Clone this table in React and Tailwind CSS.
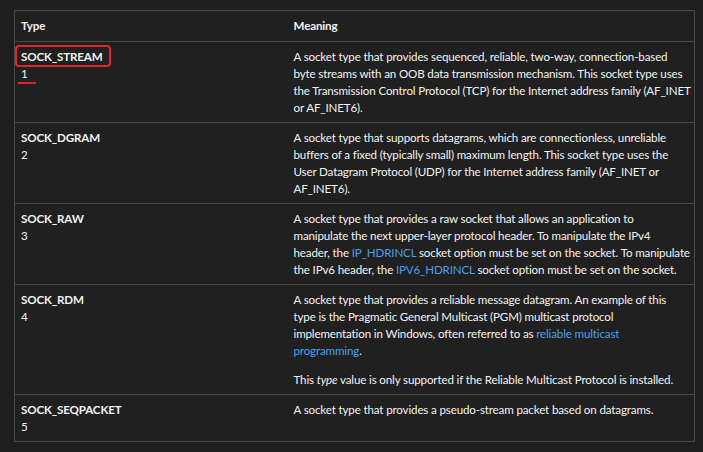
const Link = ({ children }) => <a className="text-[#4a9fe8]">{children}</a>;

const rows = [
  {
    name: 'SOCK_STREAM',
    value: '1',
    highlight: true,
    meaning: (
      <p>
        A socket type that provides sequenced, reliable, two-way, connection-based
        <br />
        byte streams with an OOB data transmission mechanism. This socket type uses
        <br />
        the Transmission Control Protocol (TCP) for the Internet address family (AF_INET
        <br />
        or AF_INET6).
      </p>
    ),
  },
  {
    name: 'SOCK_DGRAM',
    value: '2',
    meaning: (
      <p>
        A socket type that supports datagrams, which are connectionless, unreliable
        <br />
        buffers of a fixed (typically small) maximum length. This socket type uses the
        <br />
        User Datagram Protocol (UDP) for the Internet address family (AF_INET or
        <br />
        AF_INET6).
      </p>
    ),
  },
  {
    name: 'SOCK_RAW',
    value: '3',
    meaning: (
      <p>
        A socket type that provides a raw socket that allows an application to
        <br />
        manipulate the next upper-layer protocol header. To manipulate the IPv4
        <br />
        header, the <Link>IP_HDRINCL</Link> socket option must be set on the socket. To manipulate
        <br />
        the IPv6 header, the <Link>IPV6_HDRINCL</Link> socket option must be set on the socket.
      </p>
    ),
  },
  {
    name: 'SOCK_RDM',
    value: '4',
    meaning: (
      <>
        <p>
          A socket type that provides a reliable message datagram. An example of this
          <br />
          type is the Pragmatic General Multicast (PGM) multicast protocol
          <br />
          implementation in Windows, often referred to as <Link>reliable multicast</Link>
          <br />
          <Link>programming</Link>.
        </p>
        <p className="mt-[12px]">
          This <em>type</em> value is only supported if the Reliable Multicast Protocol is installed.
        </p>
      </>
    ),
  },
  {
    name: 'SOCK_SEQPACKET',
    value: '5',
    meaning: <p>A socket type that provides a pseudo-stream packet based on datagrams.</p>,
  },
];

export default function App() {
  return (
    <div
      className="w-[703px] h-[452px] overflow-hidden bg-[#1e1e1e] pt-[10px] pl-[14px] text-[11.6px] tracking-[-0.15px] leading-[17px] text-[#f2f2f2]"
      style={{ fontFamily: "'Segoe UI', Lato, 'Liberation Sans', sans-serif" }}
    >
      <table className="w-[681px] table-fixed border-collapse border border-[#4a4a4a] bg-[#202020]">
        <colgroup>
          <col className="w-[273px]" />
          <col />
        </colgroup>
        <thead>
          <tr className="border-b border-[#4a4a4a]">
            <th className="text-left font-bold pl-[6px] pt-[6px] pb-[7px] align-top">Type</th>
            <th className="text-left font-bold pl-[6px] pt-[6px] pb-[7px] align-top">Meaning</th>
          </tr>
        </thead>
        <tbody>
          {rows.map((r) => (
            <tr key={r.name} className="border-b border-[#4a4a4a] align-top">
              <td className="pl-[6px] pt-[6px] pb-[6px] last:pb-[7px]">
                {r.highlight ? (
                  <>
                    <div className="font-bold relative inline-block">
                      {r.name}
                      <span className="absolute -left-[6px] -right-[8px] -top-[3px] -bottom-[2px] border-2 border-[#e0262b] rounded-[4px]" />
                    </div>
                    <div className="relative">
                      {r.value}
                      <span className="absolute left-[-3px] top-[17px] w-[18px] h-[2px] bg-[#e0262b]" />
                    </div>
                  </>
                ) : (
                  <>
                    <div className="font-bold">{r.name}</div>
                    <div>{r.value}</div>
                  </>
                )}
              </td>
              <td className="pl-[6px] pr-[3px] pt-[6px] pb-[6px] whitespace-nowrap">{r.meaning}</td>
            </tr>
          ))}
        </tbody>
      </table>
    </div>
  );
}
